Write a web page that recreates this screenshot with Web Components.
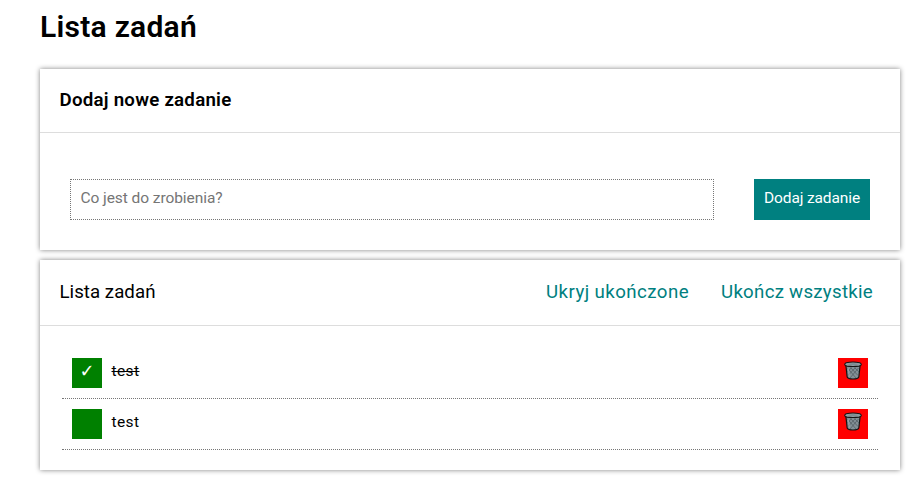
<!DOCTYPE html>
<html lang="pl">
<head>
<meta charset="utf-8">
<title>Lista zadań</title>
<style>
body{margin:0;background:#fff;color:#000;font-family:Roboto,"Noto Sans",sans-serif}
</style>
</head>
<body>
<todo-app></todo-app>
<script>
const define = (name, html, setup) => customElements.define(name, class extends HTMLElement {
  connectedCallback() {
    if (this.shadowRoot) return;
    this.attachShadow({mode: 'open'}).innerHTML = html;
    if (setup) setup(this, this.shadowRoot);
  }
});

// A single line of text tracked so that it occupies the given width.
define('fit-text', `<style>:host{display:inline-block;white-space:nowrap}span{display:inline-block;text-decoration:var(--line,none)}</style><span><slot></slot></span>`, (el, root) => {
  const span = root.querySelector('span');
  const n = el.textContent.length;
  const gap = (Number(el.getAttribute('width')) - span.getBoundingClientRect().width) / n;
  span.style.letterSpacing = gap.toFixed(3) + 'px';
});

define('trash-icon', `<style>:host{display:block;width:18px;height:20px}svg{display:block}</style>
<svg width="18" height="20" viewBox="0 0 18 20">
<path d="M1.9 4.5 3.2 16Q4 18 9 18T14.8 16L16.1 4.5Z" fill="#829096" stroke="#141414" stroke-width="1.2"/>
<path d="M3.5 7 12 17M6.5 6.5 14 14.5M10.5 6.5 15 11M14.5 7 6 17M11.5 6.5 4 14.5M7.5 6.5 3.5 11" stroke="#4f595e" stroke-width=".7" fill="none"/>
<path d="M4.2 7 5.4 15.5" stroke="#9ba5aa" stroke-width="1"/>
<path d="M2.2 1.8Q9 .3 15.8 1.8 17.5 2.5 17.2 3.8 16.9 4.8 15 5.1 9 5.9 3 5.1 1.1 4.8.8 3.8 .5 2.5 2.2 1.8Z" fill="#93a0a6" stroke="#141414" stroke-width="1.1"/>
<path d="M3 3Q9 1.8 15 3 9 4.2 3 3Z" fill="#6d797f"/>
</svg>`);

define('task-card', `<style>
:host{display:block;background:#fff;box-shadow:0 0 5px #808080}
header{box-sizing:border-box;height:var(--head,64px);border-bottom:1px solid #ddd;padding:0 27px 2px 19.5px;display:flex;align-items:center;justify-content:space-between;font-size:18.7px;line-height:22px}
</style><header><slot name="title"></slot><slot name="actions"></slot></header><slot></slot>`);

define('task-form', `<style>
:host{display:flex;gap:40px;padding:46px 30px 30px}
div,button{box-sizing:border-box;height:41px;font:15.5px/18px Roboto,sans-serif;display:flex;align-items:center}
div{flex:1;border:1px dotted #767676;padding:0 9.5px 3px;color:#757575}
button{width:116px;border:0;background:teal;color:#fff;padding:0 10px 3px}
</style><div role="textbox"><fit-text width="142">Co jest do zrobienia?</fit-text></div><button><fit-text width="96">Dodaj zadanie</fit-text></button>`);

define('task-actions', `<style>:host{display:flex;gap:32px;color:teal}</style>
<fit-text width="143">Ukryj ukończone</fit-text><fit-text width="152">Ukończ wszystkie</fit-text>`);

define('task-item', `<style>
:host{display:flex;align-items:center;gap:9.5px;box-sizing:border-box;height:51px;padding:10px;border-bottom:1px dotted #767676;font-size:15.5px;line-height:18px}
b{width:30px;height:30px;background:green;color:#fff;font:18px/26px "DejaVu Sans",sans-serif;text-align:center}
.name{flex:1;padding-bottom:4px}
:host([done]) .name{--line:line-through}
i{width:30px;height:30px;background:red;display:flex;justify-content:center;box-sizing:border-box;padding:2.5px 1px 0 0}
</style><b></b><span class="name"><slot></slot></span><i><trash-icon></trash-icon></i>`, (el, root) => {
  if (el.hasAttribute('done')) root.querySelector('b').textContent = '✓';
});

define('todo-app', `<style>
:host{display:block;padding:9px 18px 16px 40px}
h1{margin:0 0 24px;font-size:30px;line-height:36px;height:36px;font-weight:600}
task-card+task-card{margin-top:10px;--head:66px}
.new{font-weight:600}
.list{padding:22px 22px 20px}
</style>
<h1><fit-text width="157">Lista zadań</fit-text></h1>
<task-card><fit-text class="new" slot="title" width="172">Dodaj nowe zadanie</fit-text><task-form></task-form></task-card>
<task-card><fit-text slot="title" width="96">Lista zadań</fit-text><task-actions slot="actions"></task-actions>
<div class="list"><task-item done><fit-text width="28">test</fit-text></task-item><task-item><fit-text width="28">test</fit-text></task-item></div></task-card>`);
</script>
</body>
</html>
